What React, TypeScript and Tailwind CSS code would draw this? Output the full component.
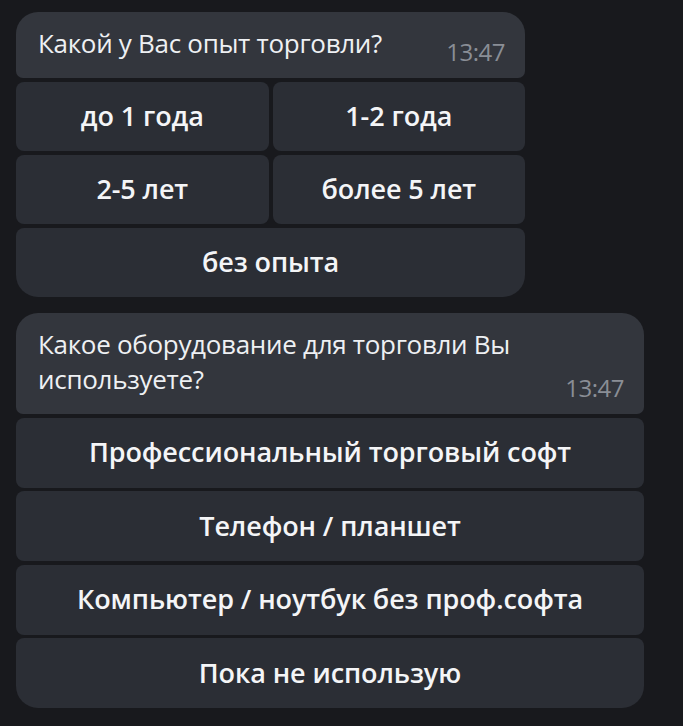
import React from 'react';

type Row = string[];

function Question({
  text,
  time,
  rows,
  width,
  btnH,
  gap,
}: {
  text: React.ReactNode;
  time: string;
  rows: Row[];
  width: string;
  btnH: string;
  gap: string;
}) {
  return (
    <div className={`flex flex-col ${gap} ${width}`}>
      <div className="bg-[#33363d] rounded-t-[22px] rounded-b-[7px] pl-[22px] pr-[20px] pt-[14px] pb-[17px] flex items-end justify-between">
        <p className="text-[26px] leading-[35px] text-[#eef0f3] tracking-[-0.3px]">{text}</p>
        <span className="text-[24px] leading-[24px] text-[#8a8e96] ml-4 -mb-[3px] tracking-[-0.5px]">{time}</span>
      </div>
      {rows.map((row, i) => {
        const last = i === rows.length - 1;
        return (
          <div key={i} className="flex gap-[4px]">
            {row.map((label) => (
              <button
                key={label}
                className={`flex-1 ${btnH} bg-[#2b2e35] text-[#f4f5f7] font-semibold text-[27px] tracking-[-0.1px] rounded-t-[8px] ${
                  last ? 'rounded-b-[22px]' : 'rounded-b-[8px]'
                }`}
              >
                {label}
              </button>
            ))}
          </div>
        );
      })}
    </div>
  );
}

export default function App() {
  return (
    <div
      className="w-[683px] h-[726px] bg-[#18191d] pl-[16px] pt-[12px] flex flex-col gap-[16px]"
      style={{ fontFamily: '"Open Sans", "Noto Sans", sans-serif' }}
    >
      <Question
        width="w-[509px]"
        btnH="h-[69px]"
        gap="gap-[4px]"
        text="Какой у Вас опыт торговли?"
        time="13:47"
        rows={[['до 1 года', '1-2 года'], ['2-5 лет', 'более 5 лет'], ['без опыта']]}
      />
      <Question
        width="w-[628px]"
        btnH="h-[70px]"
        gap="gap-[3.5px]"
        text={
          <>
            Какое оборудование для торговли Вы
            <br />
            используете?
          </>
        }
        time="13:47"
        rows={[
          ['Профессиональный торговый софт'],
          ['Телефон / планшет'],
          ['Компьютер / ноутбук без проф.софта'],
          ['Пока не использую'],
        ]}
      />
    </div>
  );
}
